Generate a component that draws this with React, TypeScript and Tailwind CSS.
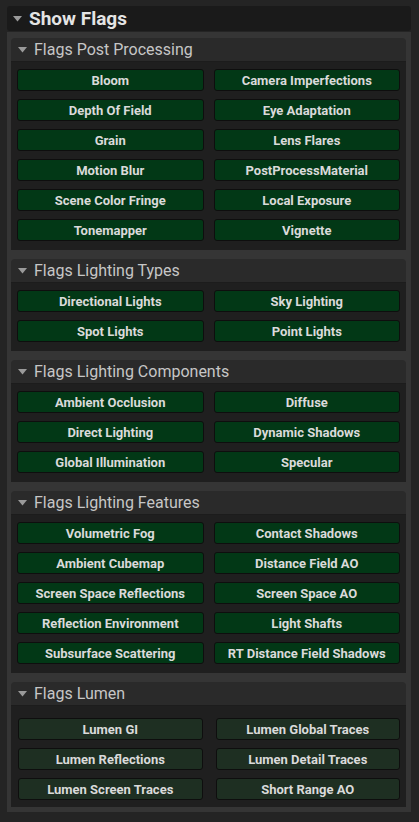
import React from "react";

const sections: { title: string; items: string[]; lumen?: boolean }[] = [
  {
    title: "Flags Post Processing",
    items: [
      "Bloom",
      "Camera Imperfections",
      "Depth Of Field",
      "Eye Adaptation",
      "Grain",
      "Lens Flares",
      "Motion Blur",
      "PostProcessMaterial",
      "Scene Color Fringe",
      "Local Exposure",
      "Tonemapper",
      "Vignette",
    ],
  },
  {
    title: "Flags Lighting Types",
    items: ["Directional Lights", "Sky Lighting", "Spot Lights", "Point Lights"],
  },
  {
    title: "Flags Lighting Components",
    items: [
      "Ambient Occlusion",
      "Diffuse",
      "Direct Lighting",
      "Dynamic Shadows",
      "Global Illumination",
      "Specular",
    ],
  },
  {
    title: "Flags Lighting Features",
    items: [
      "Volumetric Fog",
      "Contact Shadows",
      "Ambient Cubemap",
      "Distance Field AO",
      "Screen Space Reflections",
      "Screen Space AO",
      "Reflection Environment",
      "Light Shafts",
      "Subsurface Scattering",
      "RT Distance Field Shadows",
    ],
  },
  {
    title: "Flags Lumen",
    lumen: true,
    items: [
      "Lumen GI",
      "Lumen Global Traces",
      "Lumen Reflections",
      "Lumen Detail Traces",
      "Lumen Screen Traces",
      "Short Range AO",
    ],
  },
];

function Tri({ className }: { className: string }) {
  return (
    <svg width="9" height="6" viewBox="0 0 9 6" className={className}>
      <polygon points="0,0 9,0 4.5,5.5" fill="#9a9a9a" />
    </svg>
  );
}

export default function App() {
  return (
    <div
      className="w-[419px] h-[822px] bg-[#242424] pt-[6px] pl-[7px] pr-[8px]"
      style={{ fontFamily: "Roboto, 'Noto Sans', sans-serif" }}
    >
      <div className="h-[25px] bg-[#1a1a1a] rounded-[3px] flex items-center pl-[6px]">
        <Tri className="mr-[7px] mt-[1px]" />
        <span className="text-[19px] font-bold text-[#e4e4e4] leading-none">Show Flags</span>
      </div>
      <div className="mt-[1px] bg-[#353535] pt-[6px] pl-[4px] pr-[5px] pb-[5px] flex flex-col gap-[9px]">
        {sections.map((s) => (
          <div key={s.title} className="flex flex-col">
            <div className="h-[24px] bg-[#2a2a2a] rounded-t-[4px] border-b border-[#1c1c1c] flex items-center pl-[7px]">
              <Tri className="mr-[7px] mt-[1px]" />
              <span className="text-[16px] text-[#c6c6c6] leading-none">{s.title}</span>
            </div>
            <div
              className={
                s.lumen
                  ? "bg-[#1f1f1f] grid grid-cols-2 gap-x-[13px] gap-y-[8px] pt-[12px] pl-[7px] pr-[6px] pb-[7px]"
                  : "bg-[#1f1f1f] grid grid-cols-2 gap-x-[10px] gap-y-[8px] pt-[7px] px-[6px] pb-[9px]"
              }
            >
              {s.items.map((it) => (
                <div
                  key={it}
                  className={
                    s.lumen
                      ? "h-[22px] pt-[1px] rounded-[3px] border border-[#0e0e0e] bg-[#1e2f22] flex items-center justify-center text-[13px] font-bold text-[#dadada] leading-none"
                      : "h-[22px] pt-[1px] rounded-[3px] border border-[#0e0e0e] bg-[#023816] flex items-center justify-center text-[13px] font-bold text-[#dadada] leading-none"
                  }
                >
                  {it}
                </div>
              ))}
            </div>
          </div>
        ))}
      </div>
    </div>
  );
}
